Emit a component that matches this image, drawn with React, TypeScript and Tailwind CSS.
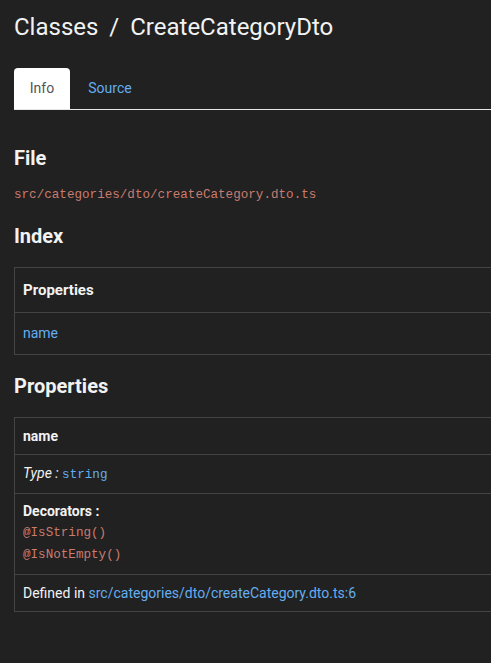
import React from "react";

const mono = "font-['Liberation_Mono',monospace] text-[12.6px] text-[#c97c6f]";
const link = "text-[#64aef0]";

export default function App() {
    const [tab, setTab] = React.useState("info");

    return (
        <div className="min-h-[663px] w-[491px] overflow-hidden bg-[#212121] font-['Roboto',sans-serif] text-[14px] text-[#f2f2f2]">
            <div className="pl-[14px] pt-[10px]">
                <h1 className="text-[24px] leading-[34px] whitespace-nowrap">
                    Classes <span className="mx-[5px]">/</span> CreateCategoryDto
                </h1>

                <div className="mt-[24px] flex border-b border-[#e6e6e6] text-[14px]">
                    <button
                        onClick={() => setTab("info")}
                        className={"h-[41px] w-[56px] rounded-t-[4px] " + (tab == "info" ? "bg-white text-[#555]" : link)}
                    >
                        Info
                    </button>
                    <button
                        onClick={() => setTab("source")}
                        className={"ml-[2px] h-[41px] w-[76px] rounded-t-[4px] " + (tab == "source" ? "bg-white text-[#555]" : link)}
                    >
                        Source
                    </button>
                </div>

                <h3 className="mt-[36px] text-[20px] font-bold leading-[24px]">File</h3>
                <p className={"mt-[16px] leading-[18px] " + mono}>src/categories/dto/createCategory.dto.ts</p>

                <h3 className="mt-[20px] text-[20px] font-bold leading-[24px]">Index</h3>
                <table className="mt-[19px] w-[520px] border-collapse">
                    <tbody>
                        <tr className="h-[45px] border border-[#444]">
                            <td className="px-[8px] text-[15px] font-bold">Properties</td>
                        </tr>
                        <tr className="h-[42px] border border-[#444]">
                            <td className={"px-[8px] " + link}>name</td>
                        </tr>
                    </tbody>
                </table>

                <h3 className="mt-[19px] text-[20px] font-bold leading-[24px]">Properties</h3>
                <table className="mt-[19px] w-[520px] border-collapse">
                    <tbody>
                        <tr className="h-[37px] border border-[#444]">
                            <td className="px-[8px] font-bold">name</td>
                        </tr>
                        <tr className="h-[39px] border border-[#444]">
                            <td className="px-[8px]">
                                <i>Type : </i>
                                <code className={"font-['Liberation_Mono',monospace] text-[12.6px] " + link}>string</code>
                            </td>
                        </tr>
                        <tr className="h-[81px] border border-[#444]">
                            <td className="px-[8px] pt-[7px] pb-[8px]">
                                <div className="font-bold leading-[21px]">Decorators : </div>
                                <div className={"leading-[22px] " + mono}>@IsString()</div>
                                <div className={"leading-[22px] " + mono}>@IsNotEmpty()</div>
                            </td>
                        </tr>
                        <tr className="h-[37px] border border-[#444]">
                            <td className="px-[8px]">
                                Defined in <a className={link}>src/categories/dto/createCategory.dto.ts:6</a>
                            </td>
                        </tr>
                    </tbody>
                </table>
            </div>
        </div>
    );
}
